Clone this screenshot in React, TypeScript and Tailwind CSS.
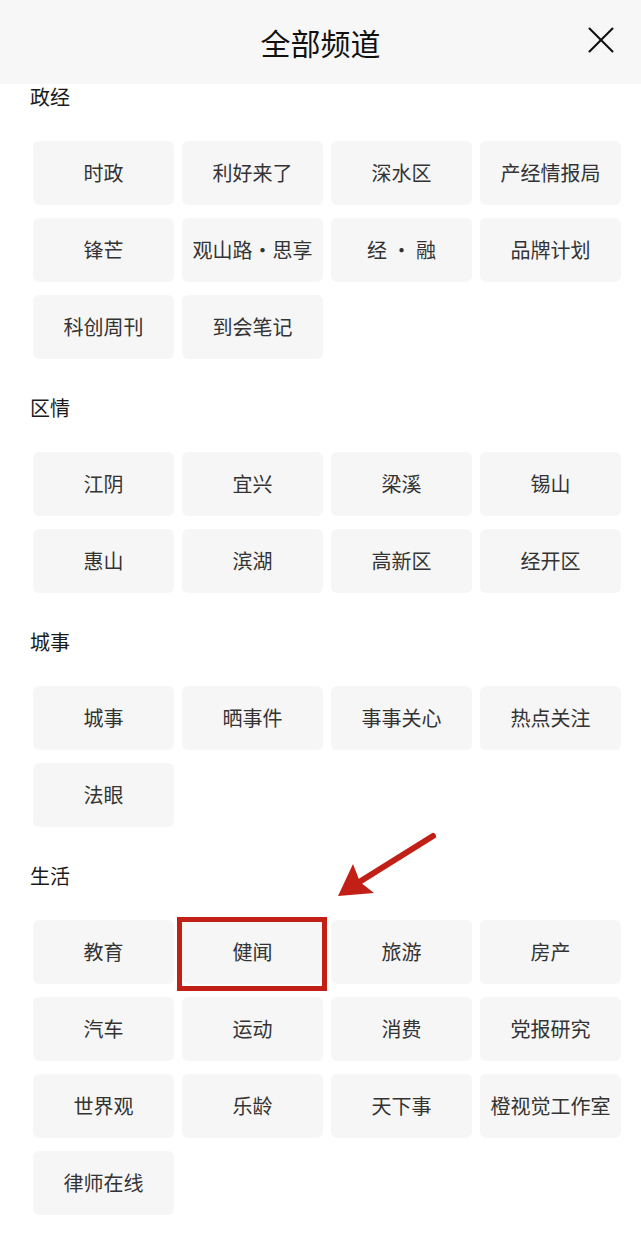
import { X } from "lucide-react";

type Section = { title: string; items: string[] };

const sections: Section[] = [
  {
    title: "政经",
    items: ["时政", "利好来了", "深水区", "产经情报局", "锋芒", "观山路·思享", "经 • 融", "品牌计划", "科创周刊", "到会笔记"],
  },
  {
    title: "区情",
    items: ["江阴", "宜兴", "梁溪", "锡山", "惠山", "滨湖", "高新区", "经开区"],
  },
  {
    title: "城事",
    items: ["城事", "晒事件", "事事关心", "热点关注", "法眼"],
  },
  {
    title: "生活",
    items: ["教育", "健闻", "旅游", "房产", "汽车", "运动", "消费", "党报研究", "世界观", "乐龄", "天下事", "橙视觉工作室", "律师在线"],
  },
];

export default function App() {
  return (
    <div
      className="relative min-h-[1258px] w-full bg-white"
      style={{ fontFamily: '"Noto Sans CJK SC", "Noto Sans", sans-serif' }}
    >
      {/* Header */}
      <header className="relative flex h-[84px] items-center justify-center bg-[#f7f7f7]">
        <h1 className="text-[30px] leading-none text-[#111]">全部频道</h1>
        <button className="absolute right-[17px] top-[17px] text-[#111]">
          <X size={46} strokeWidth={1.1} />
        </button>
      </header>

      <div className="flex flex-col gap-[37px] pt-px">
        {sections.map((section) => (
          <section key={section.title}>
            <h2 className="h-6 pl-[30px] text-[20px] leading-6 text-[#1a1a1a]">{section.title}</h2>
            <div className="mt-8 grid grid-cols-4 gap-x-2 gap-y-[13px] pl-[33px] pr-[20px]">
              {section.items.map((item) => (
                <div
                  key={item}
                  className="relative flex h-16 items-center justify-center rounded-md bg-[#f6f6f6] text-[20px] text-[#333] whitespace-nowrap"
                >
                  {item}
                  {item === "健闻" && (
                    <div className="absolute -left-[5px] -right-[4px] -top-[3px] -bottom-[7px] border-[5px] border-[#c21f17]" />
                  )}
                </div>
              ))}
            </div>
          </section>
        ))}
      </div>

      {/* Annotation arrow */}
      <svg
        className="absolute left-[330px] top-[825px]"
        width="115"
        height="80"
        viewBox="0 0 115 80"
      >
        <line x1="103" y1="11" x2="26" y2="59" stroke="#c21f17" strokeWidth="6" strokeLinecap="round" />
        <polygon points="8,71 23,39 30,57 44,68" fill="#c21f17" />
      </svg>
    </div>
  );
}
